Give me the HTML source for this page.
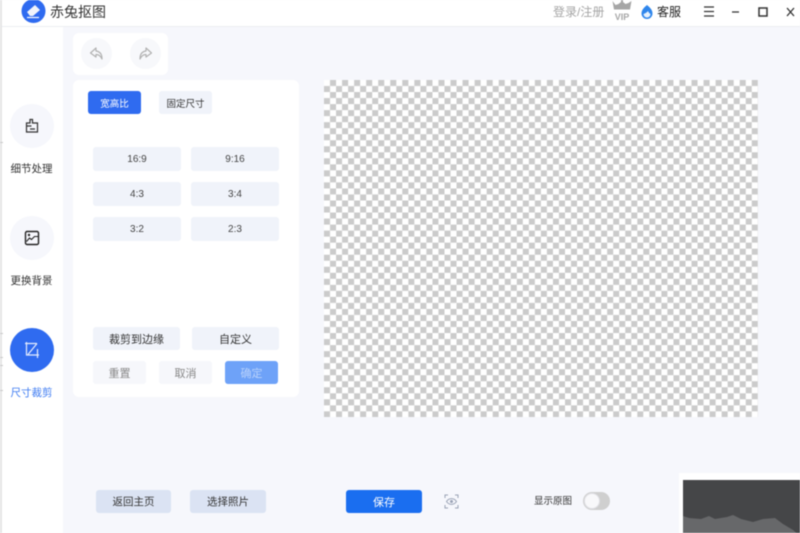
<!DOCTYPE html>
<html lang="zh"><head><meta charset="utf-8"><style>
*{box-sizing:border-box}
html,body{margin:0;padding:0}
html{background:#f6f7fc}
#p{width:800px;height:533px;overflow:hidden;position:relative;background:#f6f7fc;font-family:"Liberation Sans","Noto Sans CJK SC",sans-serif;color:#333;filter:blur(.4px)}
body{width:800px;height:533px;overflow:hidden}
.a{position:absolute}
.b{position:absolute;display:flex;align-items:center;justify-content:center;border-radius:3px;font-size:10px;white-space:nowrap}
.g{background:#f0f3fa;color:#444}
.n{width:44px;height:44px;border-radius:50%;background:#f6f7fc;left:10px;display:flex;align-items:center;justify-content:center}
.l{left:1px;width:61px;text-align:center;font-size:10.5px;color:#333}
.t{left:0;width:3px;height:1px;background:#c9c9c9}
</style></head><body><div id="p">
<div class="a" style="left:0;top:0;width:800px;height:27px;background:#fff;border-bottom:1px solid #eceef2"></div>
<div class="a" style="left:0;top:27px;width:63px;height:506px;background:#fff"></div>
<div class="a" style="left:0;top:0;width:2px;height:533px;background:#e6e6e6"></div>
<div class="a t" style="top:142px"></div><div class="a t" style="top:333px"></div><div class="a t" style="top:357px"></div><div class="a t" style="top:365px"></div><div class="a t" style="top:390px"></div>

<svg class="a" style="left:21px;top:-2px" width="25" height="26" viewBox="0 0 25 26"><circle cx="12.500" cy="13" r="12" fill="#2f6bf0"/><path d="M6 14l8-7 5 5-7 6H9z" fill="#f1f4fb"/><path d="M6 19.500h12" stroke="#fff" stroke-width="1.200"/></svg>
<div class="a" style="left:50px;top:3px;font-size:14px;line-height:19px;color:#333">赤兔抠图</div>

<div class="a" style="left:553px;top:4px;font-size:12px;line-height:17px;color:#a5a5a5">登录/注册</div>
<svg class="a" style="left:611px;top:0" width="22" height="21" viewBox="0 0 22 21"><path d="M1.500 1l3 4 3-1 2.500-2V0h2v2l2.500 2 3-1 3-2-1.500 8.500H3z" fill="#a6a6a6"/><text x="11" y="20" font-size="9" font-weight="700" text-anchor="middle" fill="#a6a6a6" font-family="Liberation Sans">VIP</text></svg>
<svg class="a" style="left:641px;top:5px" width="12" height="14" viewBox="0 0 12 14"><path d="M6 0C3 2.500.5 5 .5 8.500a5.500 5.500 0 0011 0C11.500 5 9 2.500 6 0z" fill="#2f86ec"/><path d="M2.500 9C4 8.500 6 7.500 7 6c.5 1.500 1.500 2.500 2.500 3A3.500 3.500 0 012.500 9z" fill="#e6f1fd"/></svg>
<div class="a" style="left:657px;top:4px;font-size:12px;line-height:17px;color:#222">客服</div>
<svg class="a" style="left:700px;top:4px" width="100" height="16" viewBox="0 0 100 16"><path d="M4 3h10M4 7.500h10M4 12h10M32 8h7" stroke="#333" stroke-width="1.300" fill="none"/><rect x="59" y="4" width="8" height="8" fill="none" stroke="#333" stroke-width="1.500"/><path d="M87 4l7 8M94 4l-7 8" stroke="#333" stroke-width="1.300"/></svg>

<div class="a" style="left:73px;top:33px;width:95px;height:42px;background:#fff;border-radius:6px"></div>
<div class="a" style="left:81px;top:38px;width:31px;height:31px;border-radius:50%;background:#f7f8fb"></div>
<div class="a" style="left:130px;top:38px;width:31px;height:31px;border-radius:50%;background:#f7f8fb"></div>
<svg class="a" style="left:89px;top:47px" width="15" height="14" viewBox="0 0 15 14"><path d="M7 1L1.500 6 7 10V7.500c2.500 0 4.500 1.200 6 4.500 0-5-2-7.500-6-8z" fill="none" stroke="#b2b2b2" stroke-width="1.200" stroke-linejoin="round"/></svg>
<svg class="a" style="left:138px;top:47px" width="15" height="14" viewBox="0 0 15 14"><path d="M8 1l5.500 5L8 10V7.500c-2.500 0-4.500 1.200-6 4.500 0-5 2-7.500 6-8z" fill="none" stroke="#b2b2b2" stroke-width="1.200" stroke-linejoin="round"/></svg>

<div class="a" style="left:73px;top:80px;width:226px;height:317px;background:#fff;border-radius:6px"></div>
<div class="b" style="left:88px;top:91px;width:53px;height:23px;background:#2f6bf0;color:#fff;font-size:9.500px">宽高比</div>
<div class="b g" style="left:159px;top:91px;width:53px;height:23px;color:#333;font-size:9.500px">固定尺寸</div>
<div class="b g" style="left:93px;top:147px;width:88px;height:24px">16:9</div>
<div class="b g" style="left:191px;top:147px;width:88px;height:24px">9:16</div>
<div class="b g" style="left:93px;top:182px;width:88px;height:24px">4:3</div>
<div class="b g" style="left:191px;top:182px;width:88px;height:24px">3:4</div>
<div class="b g" style="left:93px;top:217px;width:88px;height:24px">3:2</div>
<div class="b g" style="left:191px;top:217px;width:88px;height:24px">2:3</div>
<div class="b g" style="left:93px;top:327px;width:87px;height:23px;font-size:11px;color:#333">裁剪到边缘</div>
<div class="b g" style="left:192px;top:327px;width:87px;height:23px;font-size:11px;color:#333">自定义</div>
<div class="b" style="left:93px;top:361px;width:53px;height:23px;background:#f6f7fb;color:#888;font-size:11px">重置</div>
<div class="b" style="left:159px;top:361px;width:53px;height:23px;background:#f6f7fb;color:#888;font-size:11px">取消</div>
<div class="b" style="left:225px;top:361px;width:53px;height:23px;background:#6ea2f8;color:#b9d2fb;font-size:11px">确定</div>

<div class="a n" style="top:104px"><svg width="16" height="16" viewBox="0 0 16 16"><path d="M6 1.500h2.500v3.500h5v9h-11V5H6zM2.500 8h5M6 11h5" fill="none" stroke="#333" stroke-width="1.200"/></svg></div>
<div class="a l" style="top:161px">细节处理</div>
<div class="a n" style="top:216px"><svg width="16" height="16" viewBox="0 0 16 16"><rect x="1.500" y="1.500" width="13" height="13" rx="1.500" fill="none" stroke="#222" stroke-width="1.400"/><circle cx="5" cy="5" r="1.200" fill="#222"/><path d="M2.500 11.500l3-3.500 2 1.500 3-3h3.500" fill="none" stroke="#222" stroke-width="1.100"/></svg></div>
<div class="a l" style="top:273px">更换背景</div>
<div class="a n" style="top:328px;background:#2f6bf0"><svg width="16" height="16" viewBox="0 0 16 16"><path d="M2.500 0v13H15M1 1.500h12M4 12.500L13 1.500M13.500 7v9" fill="none" stroke="#e4ecfd" stroke-width="1.200"/></svg></div>
<div class="a l" style="top:385px;color:#3f7cf2">尺寸裁剪</div>

<svg class="a" style="left:324px;top:80px" width="434" height="337"><defs><pattern id="c" width="12.050" height="12.050" patternUnits="userSpaceOnUse"><rect width="12.050" height="12.050" fill="#fff"/><rect x="6" width="6.050" height="6" fill="#cbcbcb"/><rect y="6" width="6" height="6.050" fill="#cbcbcb"/></pattern></defs><rect width="434" height="337" fill="url(#c)"/></svg>

<div class="b" style="left:96px;top:490px;width:75px;height:23px;background:#dbe3f3;color:#333;font-size:10.500px">返回主页</div>
<div class="b" style="left:190px;top:490px;width:76px;height:23px;background:#dbe3f3;color:#333;font-size:10.500px">选择照片</div>
<div class="b" style="left:346px;top:490px;width:76px;height:23px;background:#1a6ef0;color:#fff;font-size:11px">保存</div>
<svg class="a" style="left:444px;top:494px" width="15" height="15" viewBox="0 0 15 15"><path d="M1 4V1h3M11 1h3v3M14 11v3h-3M4 14H1v-3" fill="none" stroke="#9aa3b5" stroke-width="1"/><path d="M2.500 7.500C5 3.700 10 3.700 12.500 7.500 10 11.300 5 11.300 2.500 7.500z" fill="none" stroke="#9aa3b5"/><circle cx="7.500" cy="7.500" r="1.500" fill="#9aa3b5"/></svg>
<div class="a" style="left:534px;top:495px;font-size:9.500px;line-height:14px;color:#333">显示原图</div>
<div class="a" style="left:583px;top:492px;width:27px;height:18px;border-radius:9px;background:#cfcfcf"></div>
<div class="a" style="left:584px;top:493px;width:16px;height:16px;border-radius:50%;background:#f8f8fa;border:1px solid #e0e0e5"></div>

<div class="a" style="left:679px;top:473px;width:121px;height:60px;background:#fff"></div>
<svg class="a" style="left:683px;top:480px" width="117" height="53" viewBox="0 0 117 53"><rect width="117" height="53" fill="#454648"/><path d="M0 36l6 2 12 1 8-3 6 3 12-2 6-2 8 4 12 3 10-3 12-1 8 6 10 6 7 6v3H0z" fill="#67686a"/></svg>
</div></body></html>
